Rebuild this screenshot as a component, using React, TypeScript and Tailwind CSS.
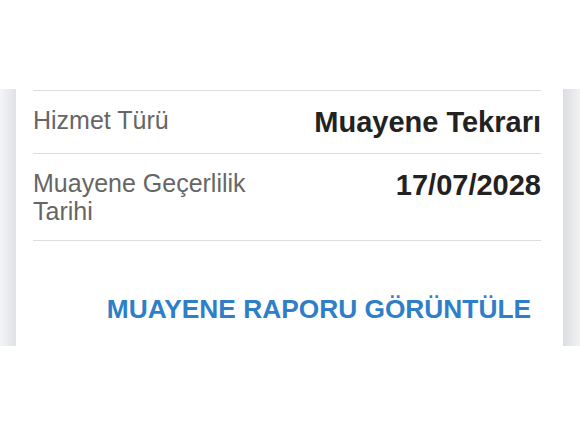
import React from "react";

const font = { fontFamily: '"Liberation Sans", Arial, sans-serif' };

function Row({
  label,
  value,
  className,
}: {
  label: React.ReactNode;
  value: string;
  className: string;
}) {
  return (
    <div className={`flex items-start justify-between border-b border-[#dddddd] ${className}`}>
      <div className="text-[25px] leading-[28px] text-[#666666] max-w-[240px]">{label}</div>
      <div className="text-[29px] leading-[34px] font-bold text-[#222222] -mt-[1px]">{value}</div>
    </div>
  );
}

export default function App() {
  return (
    <div className="w-[580px] h-[435px] bg-white overflow-hidden" style={font}>
      <div className="h-[89px]" />
      <div className="flex h-[257px]">
        <div className="w-[16px] bg-gradient-to-r from-[#f4f5f7] to-[#e1e2e5]" />
        <div className="flex-1 bg-white pl-[17px] pr-[22px]">
          <div className="border-t border-[#dddddd] mt-[1px]">
            <Row label="Hizmet Türü" value="Muayene Tekrarı" className="pt-[15px] pb-[14px]" />
            <Row
              label={
                <>
                  Muayene Geçerlilik
                  <br />
                  Tarihi
                </>
              }
              value="17/07/2028"
              className="pt-[15px] pb-[15px]"
            />
          </div>
          <div className="flex justify-end pt-[53px]">
            <button className="px-[10px] text-[26.3px] leading-[30px] font-bold text-[#2e7fc8] tracking-normal">
              MUAYENE RAPORU GÖRÜNTÜLE
            </button>
          </div>
        </div>
        <div className="w-[17px] bg-gradient-to-r from-[#dcdde0] to-[#f1f2f4]" />
      </div>
    </div>
  );
}
